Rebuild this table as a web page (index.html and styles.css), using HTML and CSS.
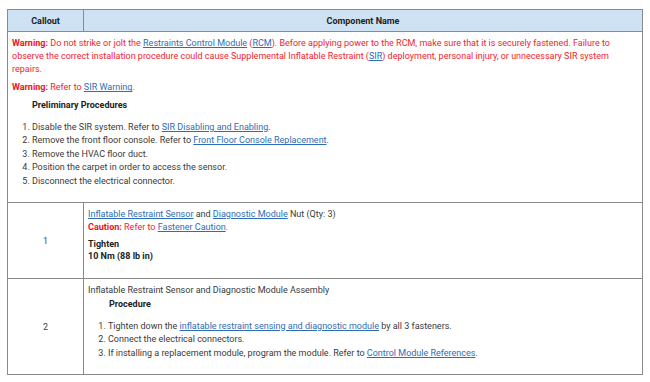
FILE: index.html
```html
<!DOCTYPE html>
<html>
<head>
<meta charset="utf-8">
<link rel="stylesheet" href="styles.css">
</head>
<body>
<table class="grid">
  <thead>
    <tr>
      <th class="col-callout">Callout</th>
      <th>Component Name</th>
    </tr>
  </thead>
  <tbody>
    <tr>
      <td colspan="2" class="intro">
        <p class="warn"><b>Warning:</b> Do not strike or jolt the <a href="#">Restraints Control Module</a> (<a href="#">RCM</a>). Before applying power to the RCM, make sure that it is securely fastened. Failure to observe the correct installation procedure could cause Supplemental Inflatable Restraint (<a href="#">SIR</a>) deployment, personal injury, or unnecessary SIR system repairs.</p>
        <p class="warn"><b>Warning:</b> Refer to <a href="#">SIR Warning</a>.</p>
        <p class="heading">Preliminary Procedures</p>
        <ol class="steps">
          <li>Disable the SIR system. Refer to <a href="#">SIR Disabling and Enabling</a>.</li>
          <li>Remove the front floor console. Refer to <a href="#">Front Floor Console Replacement</a>.</li>
          <li>Remove the HVAC floor duct.</li>
          <li>Position the carpet in order to access the sensor.</li>
          <li>Disconnect the electrical connector.</li>
        </ol>
      </td>
    </tr>
    <tr class="row1">
      <td class="num">1</td>
      <td class="content">
        <p><a href="#">Inflatable Restraint Sensor</a> and <a href="#">Diagnostic Module</a> Nut (Qty: 3)</p>
        <p class="warn"><b>Caution:</b> Refer to <a href="#">Fastener Caution</a>.</p>
        <p class="bold tighten">Tighten</p>
        <p class="bold">10 Nm (88 lb in)</p>
      </td>
    </tr>
    <tr class="row2">
      <td class="num">2</td>
      <td class="content">
        <p>Inflatable Restraint Sensor and Diagnostic Module Assembly</p>
        <p class="heading sub">Procedure</p>
        <ol class="steps">
          <li>Tighten down the <a href="#">inflatable restraint sensing and diagnostic module</a> by all 3 fasteners.</li>
          <li>Connect the electrical connectors.</li>
          <li>If installing a replacement module, program the module. Refer to <a href="#">Control Module References</a>.</li>
        </ol>
      </td>
    </tr>
  </tbody>
</table>
</body>
</html>
```
FILE: styles.css
```css
html, body {
  margin: 0;
  padding: 0;
  background: #ffffff;
}
body {
  padding: 9px 8px 0 7px;
  font-family: Roboto, "Liberation Sans", Arial, sans-serif;
  font-size: 9px;
  color: #3a3a3a;
}
.grid {
  width: 636px;
  border-collapse: collapse;
  border: 1px solid #8a8a8a;
}
.grid th {
  background: #cfe2f3;
  font-weight: bold;
  color: #222;
  height: 21px;
  padding: 0;
  border: 1px solid #8a8a8a;
  text-align: center;
  font-size: 9px;
}
.col-callout {
  width: 75px;
}
.grid td {
  border: 1px solid #8a8a8a;
  vertical-align: top;
}
p {
  margin: 0;
  line-height: 12.8px;
}
a {
  color: #2d6db5;
  text-decoration: underline;
}
.warn {
  color: #f0242c;
}
.warn b {
  color: #f0101a;
}
.intro {
  padding: 5px 4px 13px 4px;
  height: 152px;
}
.intro .warn + .warn {
  margin-top: 6px;
}
.heading {
  font-weight: bold;
  color: #222;
  margin-top: 5px;
  padding-left: 20px;
}
.steps {
  margin: 9px 0 0 0;
  padding-left: 20px;
}
.steps li {
  line-height: 13.5px;
}
.num {
  text-align: center;
  vertical-align: middle !important;
  color: #444;
}
.content {
  padding: 5px 5px 10px 4px;
}
.row1 .content {
  height: 60px;
}
.tighten {
  margin-top: 4px;
}
.bold {
  font-weight: bold;
  color: #222;
}
.row2 .content {
  height: 80px;
}
.heading.sub {
  margin-top: 1px;
  padding-left: 21px;
}
.row2 .steps {
  margin-top: 9px;
}
```
